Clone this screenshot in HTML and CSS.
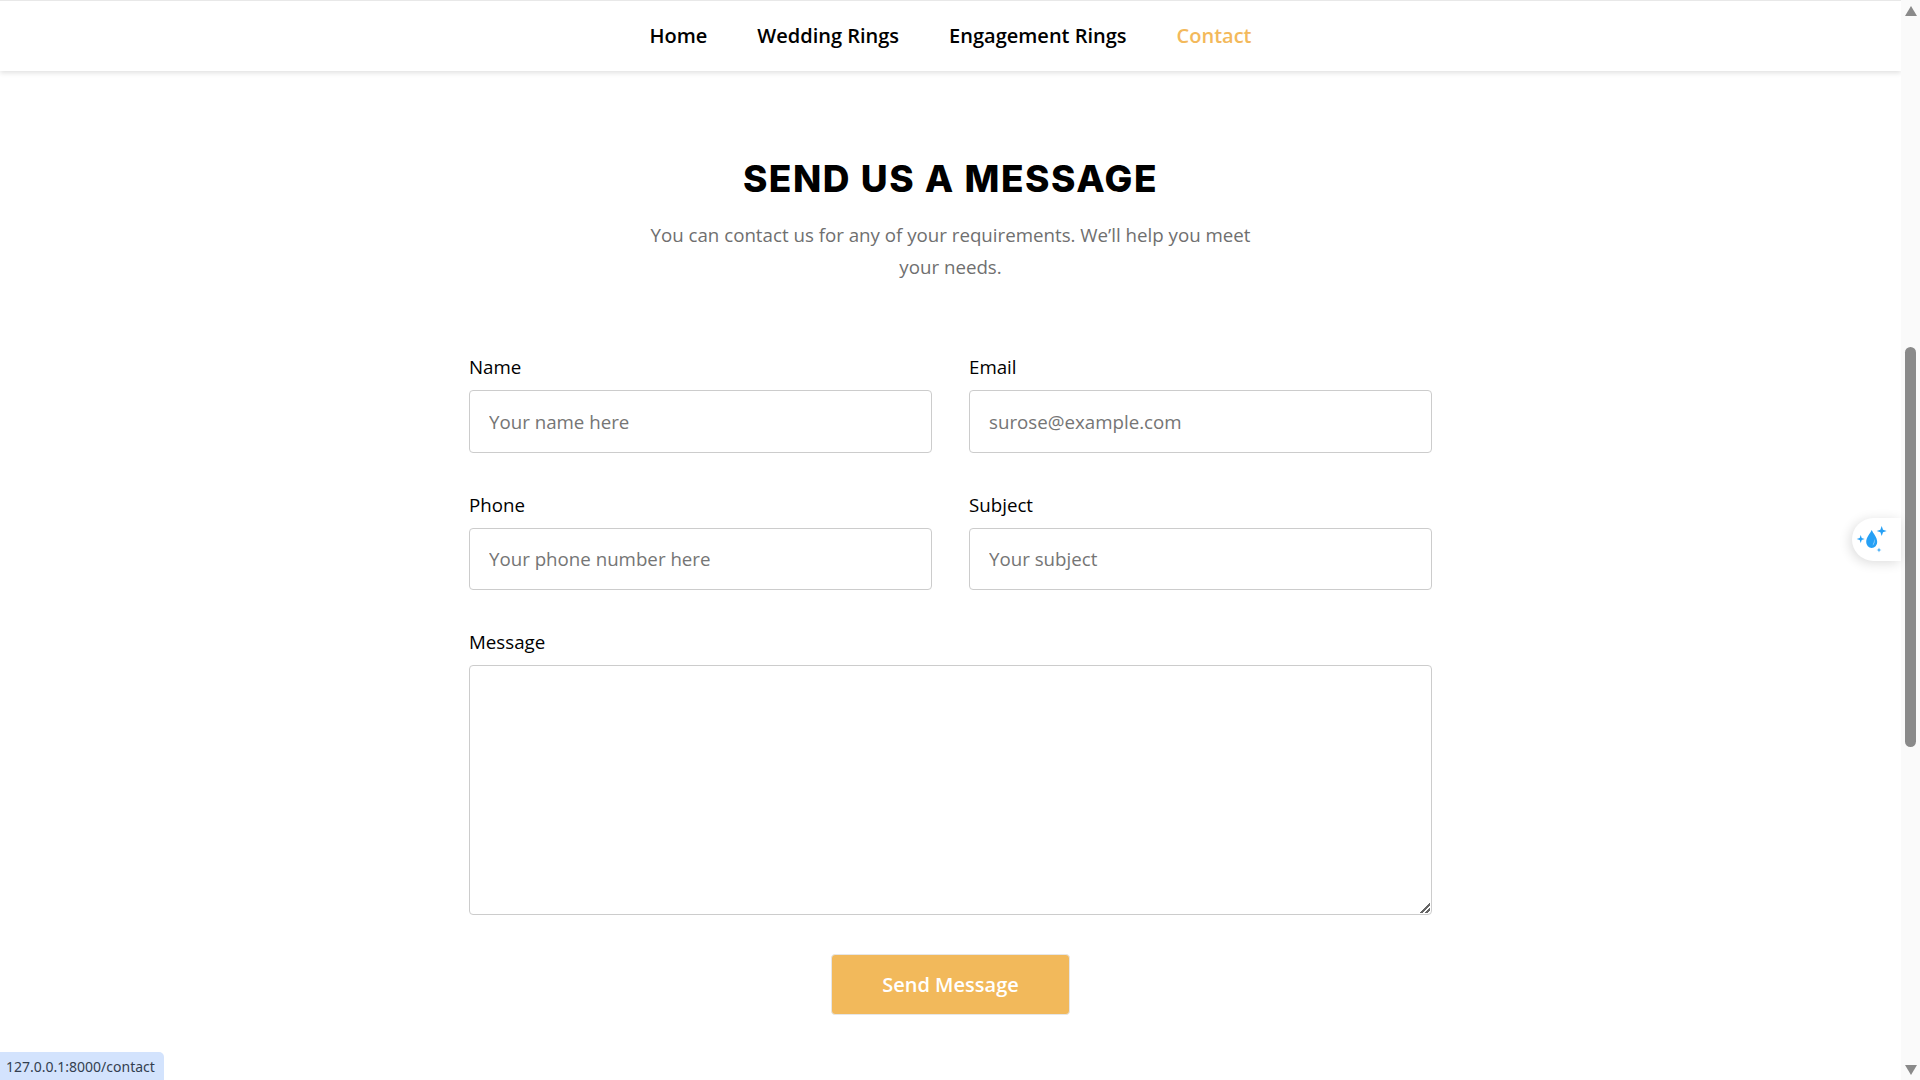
FILE: index.html
```html
<!DOCTYPE html>
<html lang="en">
<head>
<meta charset="utf-8">
<title>Contact</title>
<link rel="stylesheet" href="styles.css">
</head>
<body>
<div class="page">
  <header class="nav">
    <a href="#">Home</a>
    <a href="#">Wedding Rings</a>
    <a href="#">Engagement Rings</a>
    <a href="#" class="active">Contact</a>
  </header>
  <main class="content">
    <h1>SEND US A MESSAGE</h1>
    <p class="intro">You can contact us for any of your requirements. We’ll help you meet your needs.</p>
    <form class="form">
      <div class="field"><label for="n">Name</label><input id="n" placeholder="Your name here"></div>
      <div class="field"><label for="e">Email</label><input id="e" placeholder="surose@example.com"></div>
      <div class="field"><label for="p">Phone</label><input id="p" placeholder="Your phone number here"></div>
      <div class="field"><label for="s">Subject</label><input id="s" placeholder="Your subject"></div>
      <div class="field wide"><label for="m">Message</label><textarea id="m"></textarea></div>
      <div class="wide actions"><button type="button">Send Message</button></div>
    </form>
  </main>
</div>
<div class="scrollbar">
  <svg class="arrow" width="12" height="10" viewBox="0 0 12 10"><path d="M6 0 12 10H0z"/></svg>
  <div class="track"><div class="thumb"></div></div>
  <svg class="arrow" width="12" height="10" viewBox="0 0 12 10"><path d="M0 0h12L6 10z"/></svg>
</div>
<div class="widget">
  <svg width="32" height="32" viewBox="0 0 32 32" fill="#26a0f5">
    <path d="M15.700 7c1.500 3.500 5.500 7 5.500 12a5.500 6 0 0 1-11 0c0-5 4-8.500 5.500-12z"/>
    <path d="M18 16c1 2.500.7 5-1.500 6.500 1.200-2 1.700-4 1.500-6.500z" fill="#bfe3fb"/>
    <path d="M25.700 3l1.300 3.700L30.700 8 27 9.300 25.700 13l-1.300-3.700L20.700 8l3.700-1.300z"/>
    <path d="M4.700 12l1 3 3 1-3 1-1 3-1-3-3-1 3-1z"/>
    <path d="M23 24.500l.6 1.900 1.900.6-1.900.6-.6 1.900-.6-1.900-1.900-.6 1.900-.6z"/>
  </svg>
</div>
<div class="status">127.0.0.1:8000/contact</div>
</body>
</html>
```
FILE: styles.css
```css
* { box-sizing: border-box; }
html, body { margin: 0; height: 100%; overflow: hidden; background: #fff; }
body { display: flex; font-family: "Open Sans", sans-serif; color: #000; }
.page { flex: 1; min-width: 0; }
.nav {
  height: 71px;
  border-top: 1px solid #e8e8e8;
  box-shadow: 0 2px 5px rgba(0, 0, 0, .12);
  display: flex;
  justify-content: center;
  align-items: center;
  gap: 50px;
  padding-bottom: 1px;
}
.nav a { color: #000; text-decoration: none; font-size: 20px; font-weight: 600; }
.nav a.active { color: #f3b95b; }
.content { width: 963px; margin: 0 auto; padding-top: 83px; }
h1 {
  margin: 0;
  text-align: center;
  font: 800 37px/49px Inter, sans-serif;
  letter-spacing: 1.55px;
}
.intro {
  width: 620px;
  margin: 16px auto 0;
  text-align: center;
  font-size: 18.72px;
  line-height: 32px;
  color: #6f6f6f;
}
.form {
  display: grid;
  grid-template-columns: 463px 463px;
  column-gap: 37px;
  row-gap: 39px;
  margin-top: 71px;
}
.wide { grid-column: 1 / -1; }
.field { display: flex; flex-direction: column; gap: 11px; }
label { font-size: 18.72px; line-height: 25px; }
input, textarea {
  display: block;
  width: 100%;
  border: 1px solid #ccc;
  border-radius: 4px;
  background: #fff;
  padding: 0 19px;
  font: 400 18.72px "Open Sans", sans-serif;
  outline: none;
}
input { height: 62.5px; }
textarea { height: 250px; }
textarea::-webkit-resizer {
  background: linear-gradient(135deg, transparent 50%, #666 50%, #666 62%, transparent 62%, transparent 75%, #666 75%, #666 87%, transparent 87%) right 1px bottom 1px / 10px 10px no-repeat;
}
input::placeholder { color: #757575; opacity: 1; }
.actions { display: flex; justify-content: center; }
button {
  width: 239px;
  height: 61px;
  border: 1px solid #e6e6e6;
  border-radius: 4px;
  background: #f2b95b;
  color: #fff;
  font: 600 20px "Open Sans", sans-serif;
}
.scrollbar {
  width: 19px;
  flex: none;
  background: #fafafa;
  display: flex;
  flex-direction: column;
  align-items: center;
  padding: 6px 0 5px;
}
.arrow { fill: #8a8a8a; flex: none; }
.track { flex: 1; width: 100%; padding-top: 331px; }
.thumb { width: 11px; height: 400px; margin: 0 auto; border-radius: 6px; background: #8a8a8a; }
.status {
  position: absolute;
  left: 0;
  bottom: 0;
  height: 28px;
  width: 164px;
  padding: 2px 0 0 6px;
  background: #d3e3fd;
  border-top-right-radius: 5px;
  color: #333f50;
  font: 400 14px/26px "Noto Sans", sans-serif;
}
.widget {
  position: absolute;
  top: 518px;
  right: 19px;
  width: 49px;
  height: 43px;
  border-radius: 22px 0 0 22px;
  background: #fff;
  box-shadow: -2px 2px 12px rgba(0, 0, 0, .14);
  padding: 5px 0 0 4px;
}
```
